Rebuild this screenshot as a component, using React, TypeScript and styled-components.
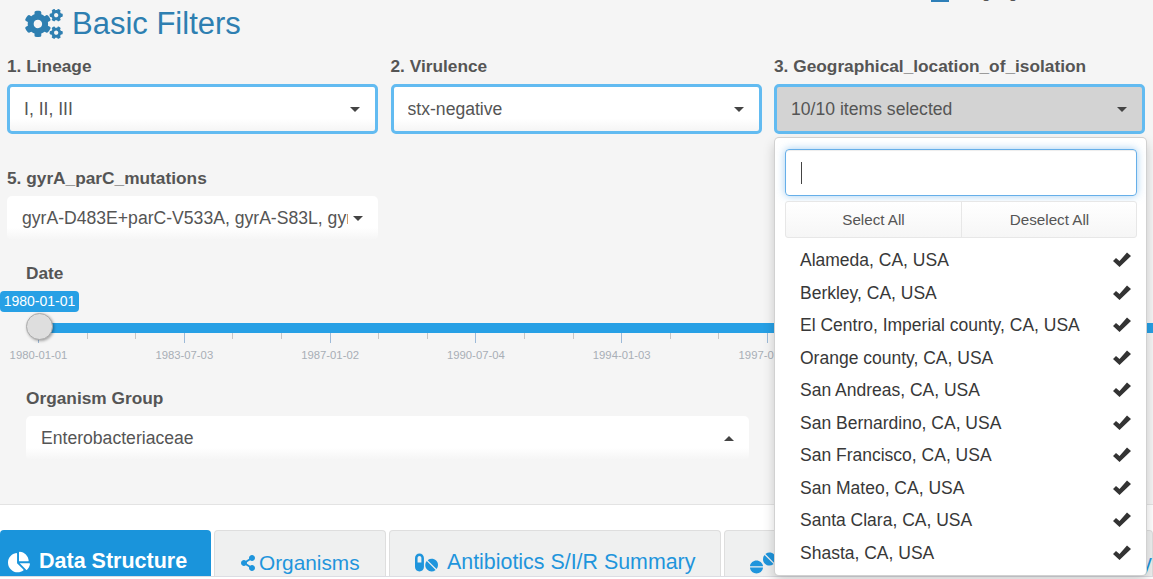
import styled, { createGlobalStyle } from "styled-components";
import {
  FaChartPie,
  FaCogs,
  FaPills,
  FaShareAlt,
  FaTablets,
} from "react-icons/fa";

const GlobalStyle = createGlobalStyle`
  html, body {
    margin: 0;
    padding: 0;
    height: 579px;
    overflow: hidden;
    background: #fff;
  }
  * {
    box-sizing: border-box;
  }
`;

const Page = styled.div`
  position: relative;
  width: 1153px;
  height: 579px;
  overflow: hidden;
  font-family: "Liberation Sans", Arial, sans-serif;
  color: #555;
`;

const Language = styled.div`
  position: absolute;
  top: -17px;
  left: 931px;
  display: flex;
  align-items: flex-end;
  gap: 6px;
  font-size: 16px;
  line-height: 18px;
  color: #555;
`;

const LanguageFlag = styled.span`
  width: 18px;
  height: 19px;
  background: #2e7fb8;
`;

const FilterPanel = styled.section`
  height: 505px;
  background: #f5f5f5;
  border-bottom: 1px solid #e3e3e3;
`;

const Heading = styled.h2`
  display: flex;
  align-items: center;
  gap: 9px;
  height: 54px;
  margin: 0;
  padding: 0 0 7px 25px;
  font-size: 31px;
  font-weight: 400;
  color: #2e7fb1;
  svg {
    width: 38px;
    height: 30px;
  }
`;

const TopRow = styled.div`
  display: grid;
  grid-template-columns: repeat(3, 371px);
  gap: 12.5px;
  padding-left: 7px;
`;

const Field = styled.div`
  position: relative;
`;

const Label = styled.label`
  display: block;
  height: 24px;
  margin-bottom: 6px;
  font-size: 17.3px;
  font-weight: 700;
  line-height: 24.5px;
  color: #555;
`;

const SelectBox = styled.div<{ $open?: boolean; $focused?: boolean }>`
  display: flex;
  align-items: center;
  justify-content: space-between;
  height: ${(p) => (p.$focused ? "50px" : "44px")};
  padding: ${(p) => (p.$focused ? "0 15px 0 14px" : "0 15px 0 15px")};
  font-size: 17.6px;
  color: #555;
  border-radius: 5px;
  border: ${(p) => (p.$focused ? "3px solid #62bbf1" : "none")};
  background: ${(p) =>
    p.$open ? "#d3d3d3" : "linear-gradient(#fff 72%, #f5f5f5 100%)"};
`;

const SelectText = styled.span`
  flex: 1;
  min-width: 0;
  overflow: hidden;
  white-space: nowrap;
`;

const Caret = styled.span<{ $up?: boolean }>`
  flex: none;
  width: 0;
  height: 0;
  margin-left: 5px;
  border-left: 5px solid transparent;
  border-right: 5px solid transparent;
  border-top: ${(p) => (p.$up ? "0" : "5px solid #444")};
  border-bottom: ${(p) => (p.$up ? "5px solid #444" : "0")};
`;

const MutationField = styled.div`
  width: 371px;
  margin: 32px 0 0 7px;
`;

const DateField = styled.div`
  margin-top: 21px;
`;

const IndentedLabel = styled(Label)`
  margin-left: 26px;
`;

const Slider = styled.div`
  position: relative;
  height: 95px;
  padding-top: 32px;
`;

const SliderBar = styled.div`
  height: 10px;
  margin-left: 39px;
  background: #27a0e5;
`;

const Tooltip = styled.div`
  position: absolute;
  top: 0;
  left: 0;
  width: 79px;
  height: 21px;
  font-size: 14px;
  line-height: 21px;
  text-align: center;
  color: #fff;
  background: #27a0e5;
  border-radius: 4px;
`;

const Handle = styled.div`
  position: absolute;
  top: 22px;
  left: 26px;
  width: 27px;
  height: 27px;
  background: #dedede;
  border: 1px solid #ababab;
  border-radius: 50%;
  box-shadow: 1px 1px 3px rgba(0, 0, 0, 0.35);
`;

const TickRow = styled.div`
  display: flex;
  height: 10px;
  padding-left: 38px;
`;

const Tick = styled.span<{ $major: boolean }>`
  flex: 0 0 48.6px;
  display: block;
  height: ${(p) => (p.$major ? "10px" : "6px")};
  border-left: 1px solid ${(p) => (p.$major ? "#9dbad8" : "#c6c6c6")};
`;

const ScaleRow = styled.div`
  display: flex;
  margin-top: 5px;
  padding-left: 38.5px;
  font-size: 11.3px;
  line-height: 14px;
  color: #a8aeb6;
`;

const ScaleMark = styled.span`
  flex: 0 0 145.8px;
  span {
    display: inline-block;
    transform: translateX(-50%);
  }
`;

const GroupSelect = styled(SelectBox)`
  width: 723px;
  margin-left: 26px;
`;

const TabBar = styled.nav`
  display: flex;
  gap: 3px;
  height: 47px;
  margin-top: 25px;
  border-bottom: 1px solid #dcdde3;
`;

const Tab = styled.div`
  display: flex;
  flex: none;
  align-items: center;
  gap: 6px;
  padding-top: 18px;
  font-size: 21.2px;
  white-space: nowrap;
  color: #1f95dc;
  background: #eff0f0;
  border: 1px solid #dedede;
  border-bottom: none;
  border-radius: 4px 4px 0 0;
  svg {
    flex: none;
  }
`;

const ActiveTab = styled(Tab)`
  width: 211px;
  gap: 9px;
  padding: 17px 0 0 8px;
  font-size: 21.5px;
  font-weight: 700;
  color: #fff;
  background: #1a94db;
  border: none;
`;

const OrganismTab = styled(Tab)`
  width: 172px;
  gap: 3px;
  padding-left: 25px;
  font-size: 20.8px;
`;

const SummaryTab = styled(Tab)`
  width: 332px;
  gap: 9px;
  padding-left: 25px;
  font-size: 21.4px;
`;

const ProfileTab = styled(Tab)`
  width: 429px;
  padding-left: 25px;
`;

const Dropdown = styled.div`
  position: absolute;
  top: 83px;
  left: 0;
  z-index: 10;
  width: 373px;
  height: 439px;
  padding: 11px 9.5px 0 10px;
  background: #fff;
  border: 1px solid rgba(0, 0, 0, 0.18);
  border-radius: 5px;
  box-shadow: 0 6px 12px rgba(0, 0, 0, 0.18);
`;

const SearchBox = styled.div`
  display: flex;
  align-items: center;
  height: 47px;
  padding-left: 15px;
  border: 1px solid #66afe9;
  border-radius: 4px;
  box-shadow: inset 0 1px 1px rgba(0, 0, 0, 0.075),
    0 0 8px rgba(102, 175, 233, 0.6);
`;

const TextCaret = styled.span`
  width: 1px;
  height: 22px;
  background: #444;
`;

const ActionGroup = styled.div`
  display: grid;
  grid-template-columns: 175px 176px;
  height: 37px;
  margin-top: 5px;
  border: 1px solid #e7e7e7;
  border-radius: 3px;
  background: linear-gradient(#fff, #f6f6f6);
`;

const ActionButton = styled.button`
  padding: 0;
  border: none;
  border-left: 1px solid #e7e7e7;
  background: none;
  font-family: inherit;
  font-size: 15.2px;
  color: #555;
  &:first-child {
    border-left: none;
  }
`;

const OptionList = styled.ul`
  margin: 6.3px 0 0;
  padding: 0;
  list-style: none;
`;

const Option = styled.li`
  display: flex;
  align-items: center;
  justify-content: space-between;
  height: 32.55px;
  padding: 0 6px 0 15px;
  font-size: 17.5px;
  color: #383838;
`;

const CheckMark = styled.svg`
  width: 18px;
  height: 15px;
  margin-top: -2px;
  fill: #333;
`;

const locations = [
  "Alameda, CA, USA",
  "Berkley, CA, USA",
  "El Centro, Imperial county, CA, USA",
  "Orange county, CA, USA",
  "San Andreas, CA, USA",
  "San Bernardino, CA, USA",
  "San Francisco, CA, USA",
  "San Mateo, CA, USA",
  "Santa Clara, CA, USA",
  "Shasta, CA, USA",
];

const scale = [
  "1980-01-01",
  "1983-07-03",
  "1987-01-02",
  "1990-07-04",
  "1994-01-03",
  "1997-07-05",
  "2001-01-03",
  "2004-07-05",
];

export default function App() {
  return (
    <Page>
      <GlobalStyle />
      <Language>
        <LanguageFlag />
        Language
      </Language>
      <FilterPanel>
        <Heading>
          <FaCogs />
          Basic Filters
        </Heading>
        <TopRow>
          <Field>
            <Label>1. Lineage</Label>
            <SelectBox $focused>
              <SelectText>I, II, III</SelectText>
              <Caret />
            </SelectBox>
          </Field>
          <Field>
            <Label>2. Virulence</Label>
            <SelectBox $focused>
              <SelectText>stx-negative</SelectText>
              <Caret />
            </SelectBox>
          </Field>
          <Field>
            <Label>3. Geographical_location_of_isolation</Label>
            <SelectBox $focused $open>
              <SelectText>10/10 items selected</SelectText>
              <Caret />
            </SelectBox>
            <Dropdown>
              <SearchBox>
                <TextCaret />
              </SearchBox>
              <ActionGroup>
                <ActionButton>Select All</ActionButton>
                <ActionButton>Deselect All</ActionButton>
              </ActionGroup>
              <OptionList>
                {locations.map((name) => (
                  <Option key={name}>
                    {name}
                    <CheckMark viewBox="0 0 18 15">
                      <polygon points="0,9 3,6 6.5,9 14,0.5 18,4 6.5,15" />
                    </CheckMark>
                  </Option>
                ))}
              </OptionList>
            </Dropdown>
          </Field>
        </TopRow>
        <MutationField>
          <Label>5. gyrA_parC_mutations</Label>
          <SelectBox>
            <SelectText>gyrA-D483E+parC-V533A, gyrA-S83L, gyrA-S83L+parC-S80I</SelectText>
            <Caret />
          </SelectBox>
        </MutationField>
        <DateField>
          <IndentedLabel>Date</IndentedLabel>
          <Slider>
            <Tooltip>1980-01-01</Tooltip>
            <SliderBar />
            <Handle />
            <TickRow>
              {Array.from({ length: 24 }, (_, i) => (
                <Tick key={i} $major={i % 3 === 0} />
              ))}
            </TickRow>
            <ScaleRow>
              {scale.map((date) => (
                <ScaleMark key={date}>
                  <span>{date}</span>
                </ScaleMark>
              ))}
            </ScaleRow>
          </Slider>
        </DateField>
        <div>
          <IndentedLabel>Organism Group</IndentedLabel>
          <GroupSelect>
            <SelectText>Enterobacteriaceae</SelectText>
            <Caret $up />
          </GroupSelect>
        </div>
      </FilterPanel>
      <TabBar>
        <ActiveTab>
          <FaChartPie size={22} />
          Data Structure
        </ActiveTab>
        <OrganismTab>
          <FaShareAlt size={16} />
          Organisms
        </OrganismTab>
        <SummaryTab>
          <FaPills size={23} />
          Antibiotics S/I/R Summary
        </SummaryTab>
        <ProfileTab>
          <FaTablets size={26} />
          Antibiotics Resistance Profile Summary
        </ProfileTab>
      </TabBar>
    </Page>
  );
}
